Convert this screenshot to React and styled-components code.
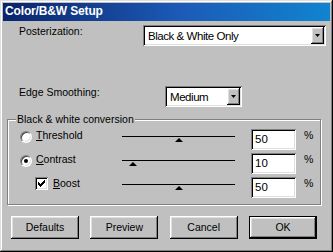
import React from "react";
import styled, { createGlobalStyle } from "styled-components";

const GlobalStyle = createGlobalStyle`
  html, body {
    margin: 0;
    padding: 0;
    background: #c0c0c0;
  }
  body {
    font-family: "Liberation Sans", Arial, sans-serif;
    font-size: 10.5px;
    color: #000;
  }
`;

const raised = `
  box-shadow: inset -1px -1px #000, inset 1px 1px #fff,
    inset -2px -2px #808080, inset 2px 2px #dfdfdf;
`;

const sunken = `
  box-shadow: inset 1px 1px #808080, inset -1px -1px #fff,
    inset 2px 2px #000, inset -2px -2px #dfdfdf;
`;

const Window = styled.div`
  width: 333px;
  height: 252px;
  box-sizing: border-box;
  padding: 3px;
  background: #c0c0c0;
  box-shadow: inset -1px -1px #000, inset 1px 1px #dfdfdf,
    inset -2px -2px #808080, inset 2px 2px #fff;
  display: flex;
  flex-direction: column;
`;

const TitleBar = styled.div`
  height: 18px;
  flex: none;
  padding-left: 2px;
  background: linear-gradient(90deg, #0a246a 0%, #1c5bb8 55%, #1084d0 100%);
  color: #fff;
  font-weight: bold;
  font-size: 12px;
  line-height: 16px;
  letter-spacing: -0.15px;
  white-space: nowrap;
`;

const Body = styled.div`
  flex: 1;
  display: flex;
  flex-direction: column;
`;

const FieldRow = styled.div`
  display: flex;
  align-items: flex-start;
  height: 21px;
  margin-top: ${(p) => p.$top}px;
  padding: 0 4px 0 16px;
`;

const FieldLabel = styled.div`
  flex: 0 0 ${(p) => p.$width}px;
  line-height: 13px;
  white-space: nowrap;
`;

const Select = styled.div`
  width: ${(p) => p.$width}px;
  height: 21px;
  box-sizing: border-box;
  padding: 2px;
  background: #fff;
  ${sunken}
  display: flex;
  align-items: center;
`;

const SelectText = styled.span`
  flex: 1;
  padding-left: 3px;
  font-size: 11.5px;
  letter-spacing: -0.45px;
  white-space: nowrap;
  overflow: hidden;
`;

const SelectButton = styled.div`
  width: 13px;
  height: 17px;
  flex: none;
  background: #c0c0c0;
  ${raised}
  display: flex;
  align-items: center;
  justify-content: center;
`;

const Group = styled.div`
  position: relative;
  margin: 12px 9px 0 4px;
  padding: 9px 0 6px 12px;
  border: 1px solid #808080;
  box-shadow: inset 1px 1px #fff, 1px 1px #fff;
  display: flex;
  flex-direction: column;
  gap: 3px;
`;

const GroupLabel = styled.div`
  position: absolute;
  top: -7px;
  left: 8px;
  padding: 0 1px;
  background: #c0c0c0;
  line-height: 13px;
  white-space: nowrap;
`;

const OptionRow = styled.div`
  display: flex;
  align-items: flex-start;
  height: 21px;
`;

const Choice = styled.div`
  flex: 0 0 102px;
  box-sizing: border-box;
  padding-left: ${(p) => p.$indent}px;
  display: flex;
  align-items: flex-start;
  gap: ${(p) => p.$gap}px;
`;

const ChoiceLabel = styled.span`
  line-height: 13px;
  white-space: nowrap;
`;

const Radio = styled.div`
  width: 12px;
  height: 12px;
  margin-top: 2px;
  box-sizing: border-box;
  border-radius: 50%;
  border: 1px solid;
  border-color: #808080 #fff #fff #808080;
  background: #fff;
  box-shadow: inset 1px 1px #404040, inset -1px -1px #dfdfdf;
  display: flex;
  align-items: center;
  justify-content: center;

  &::after {
    content: "";
    width: 4px;
    height: 4px;
    border-radius: 50%;
    background: #000;
    display: ${(p) => (p.$checked ? "block" : "none")};
  }
`;

const Checkbox = styled.div`
  width: 13px;
  height: 13px;
  background: #fff;
  ${sunken}
  display: flex;
  align-items: center;
  justify-content: center;
`;

const Track = styled.div`
  position: relative;
  width: 113px;
  height: 15px;
  flex: none;

  &::before {
    content: "";
    position: absolute;
    left: 0;
    right: 0;
    top: 7px;
    height: 1px;
    background: #000;
  }
`;

const Thumb = styled.div`
  position: absolute;
  top: 9px;
  width: 0;
  height: 0;
  margin-left: -4px;
  border-left: 4px solid transparent;
  border-right: 4px solid transparent;
  border-bottom: 4px solid #000;
`;

const Edit = styled.div`
  width: 45px;
  height: 21px;
  margin-left: 16px;
  box-sizing: border-box;
  padding-left: 4px;
  background: #fff;
  ${sunken}
  font-size: 11.5px;
  line-height: 21px;
`;

const Unit = styled.span`
  margin-left: 8px;
  line-height: 13px;
`;

const ButtonBar = styled.div`
  display: flex;
  justify-content: space-between;
  margin-top: 11px;
  padding: 0 13px 0 8px;
`;

const Button = styled.div`
  width: 68px;
  height: 23px;
  background: #c0c0c0;
  display: flex;
  align-items: center;
  justify-content: center;
  padding-bottom: 1px;
  box-sizing: border-box;
  ${(p) =>
    p.$default
      ? `box-shadow: inset 0 0 0 1px #000, inset -2px -2px #000, inset 2px 2px #fff,
          inset -3px -3px #808080, inset 3px 3px #dfdfdf;`
      : raised}
`;

function DownArrow() {
  return (
    <svg width="5" height="3" viewBox="0 0 5 3">
      <path d="M0 0h5L2.5 3z" fill="#000" />
    </svg>
  );
}

function Check() {
  const tops = [2, 3, 4, 3, 2, 1, 0];
  const d = tops.map((t, i) => `M${i} ${t}h1v3h-1z`).join("");
  return (
    <svg width="7" height="7" viewBox="0 0 7 7">
      <path d={d} fill="#000" />
    </svg>
  );
}

function Dropdown({ width, value }) {
  return (
    <Select $width={width}>
      <SelectText>{value}</SelectText>
      <SelectButton>
        <DownArrow />
      </SelectButton>
    </Select>
  );
}

function SliderRow({ control, indent, gap, label, value }) {
  return (
    <OptionRow>
      <Choice $indent={indent} $gap={gap}>
        {control}
        <ChoiceLabel>{label}</ChoiceLabel>
      </Choice>
      <Track>
        <Thumb style={{ left: `${value}%` }} />
      </Track>
      <Edit>{value}</Edit>
      <Unit>%</Unit>
    </OptionRow>
  );
}

export default function App() {
  return (
    <>
      <GlobalStyle />
      <Window>
        <TitleBar>Color/B&amp;W Setup</TitleBar>
        <Body>
          <FieldRow $top={4}>
            <FieldLabel $width={124}>Posterization:</FieldLabel>
            <Dropdown width={183} value="Black & White Only" />
          </FieldRow>
          <FieldRow $top={40}>
            <FieldLabel $width={146}>Edge Smoothing:</FieldLabel>
            <Dropdown width={77} value="Medium" />
          </FieldRow>

          <Group>
            <GroupLabel>Black &amp; white conversion</GroupLabel>
            <SliderRow
              control={<Radio />}
              indent={0}
              gap={4}
              label={<><u>T</u>hreshold</>}
              value={50}
            />
            <SliderRow
              control={<Radio $checked />}
              indent={0}
              gap={4}
              label={<><u>C</u>ontrast</>}
              value={10}
            />
            <SliderRow
              control={
                <Checkbox>
                  <Check />
                </Checkbox>
              }
              indent={15}
              gap={5}
              label={<><u>B</u>oost</>}
              value={50}
            />
          </Group>

          <ButtonBar>
            <Button>Defaults</Button>
            <Button>Preview</Button>
            <Button>Cancel</Button>
            <Button $default>OK</Button>
          </ButtonBar>
        </Body>
      </Window>
    </>
  );
}
